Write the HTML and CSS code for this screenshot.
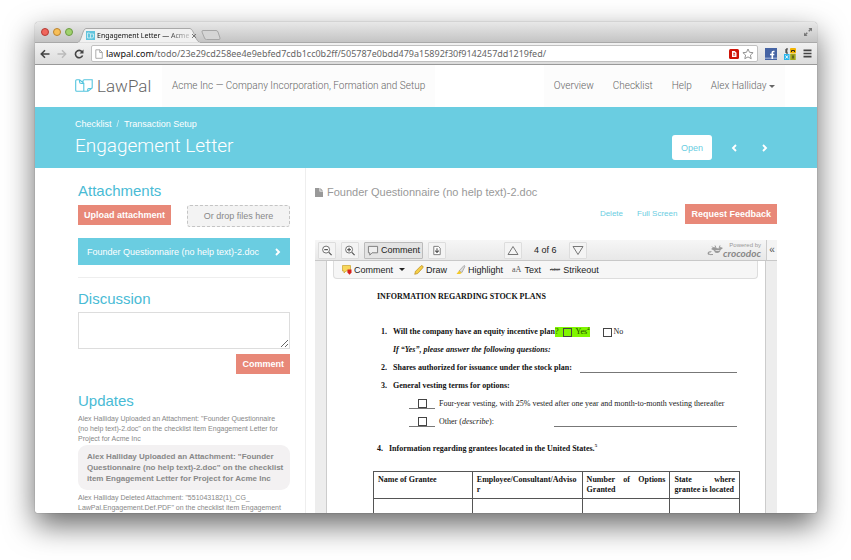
FILE: index.html
```html
<!DOCTYPE html>
<html lang="en">
<head>
<meta charset="utf-8">
<title>Engagement Letter — Acme Inc</title>
<link rel="stylesheet" href="styles.css">
</head>
<body>
<div class="window">
  <div class="tabstrip">
    <div class="lights"><i class="light red"></i><i class="light amber"></i><i class="light green"></i></div>
    <div class="tab">
      <svg class="tab-shape" viewBox="0 0 124 15" preserveAspectRatio="none"><path d="M0 15C5 14 5 1 9 .5H113C117 1 118 14 124 15Z" fill="#f1f1f1" stroke="#a9a9a9"/><path d="M1 15H123" stroke="#f1f1f1"/></svg>
      <svg class="favicon" viewBox="0 0 9 9"><rect width="9" height="9" fill="#62c4dd"/><path d="M1.500 2h2l1 1v4h-3zM4.500 3h3v3l-1 1h-2" fill="none" stroke="#d8f2f8" stroke-width=".8"/></svg>
      <span class="tab-title">Engagement Letter — Acme</span>
      <svg class="tab-close" viewBox="0 0 6 6"><path d="M1 1l4 4M5 1L1 5" stroke="#777" stroke-width="1"/></svg>
    </div>
    <svg class="newtab" viewBox="0 0 20 10"><path d="M2 .5h13q1.500 0 2 1.500l2 6q.3 1.500-1 1.500H5.500q-1.500 0-2-1.500L1 2Q.6.5 2 .5z" fill="#d5d5d5" stroke="#a6a6a6"/></svg>
    <svg class="expand" viewBox="0 0 10 10"><path d="M5.500 1H9v3.500L7.800 3.300 6.300 4.800 5.200 3.700l1.500-1.500zM4.500 9H1V5.500l1.200 1.200 1.500-1.500 1.100 1.100-1.500 1.500z" fill="#777"/></svg>
  </div>
  <div class="toolbar">
    <svg class="tool" viewBox="0 0 10 10"><path d="M9.500 5H1.500M5 1.300L1.300 5 5 8.700" fill="none" stroke="#444" stroke-width="1.600"/></svg>
    <svg class="tool" viewBox="0 0 10 10"><path d="M.5 5h8M5 1.300L8.700 5 5 8.700" fill="none" stroke="#bbb" stroke-width="1.400"/></svg>
    <svg class="tool" viewBox="0 0 10 10"><path d="M8 2.700A3.700 3.700 0 1 0 8.600 6.500" fill="none" stroke="#444" stroke-width="1.600"/><path d="M9.500.5v4h-4z" fill="#444"/></svg>
    <div class="address">
      <svg class="page-icon" viewBox="0 0 8 10"><path d="M.8.8h4l2.500 2.500v6H.8zM4.700.8v2.700h2.600" fill="#fff" stroke="#999" stroke-width=".8"/></svg>
      <span class="url"><b>lawpal.com</b>/todo/23e29cd258ee4e9ebfed7cdb1cc0b2ff/505787e0bdd479a15892f30f9142457dd1219fed/</span>
      <svg class="ext" viewBox="0 0 10 10"><rect width="10" height="10" rx="1.500" fill="#cf1408"/><path d="M3 2h2.700L7.500 3.800V8H3z" fill="#fff"/><path d="M4.200 4.300h2M4.200 6h2" stroke="#cf1408"/></svg>
      <svg class="star" viewBox="0 0 12 12"><path d="M6 1l1.500 3.300 3.600.4-2.700 2.400.8 3.600L6 8.900l-3.200 1.800.8-3.600L.9 4.700l3.600-.4z" fill="#fff" stroke="#888" stroke-width=".9"/></svg>
    </div>
    <svg class="app" viewBox="0 0 12 12"><rect width="12" height="12" fill="#4664a4"/><rect y="9.500" width="12" height="1.500" fill="#8aa0cc"/><path d="M9.500 3.500H8.300q-1 0-1 1V11M5 6.500h4.300" fill="none" stroke="#fff" stroke-width="1.600"/></svg>
    <svg class="app" viewBox="0 0 12 12"><rect width="6" height="6" fill="#e9e9e9"/><rect x="6" width="6" height="5.500" rx="1" fill="#f2b300"/><rect y="6" width="5.500" height="6" fill="#29b5ec"/><rect x="6.200" y="6" width="5.500" height="6" fill="#a2a81b"/><path d="M4 1H2v4h2M2 3h1.500M7.500 4V2.500h3V4M9 7.500v3" fill="none" stroke="#222"/><path d="M1.500 7.500l2.500 3M4 7.500l-2.500 3" stroke="#fff"/></svg>
    <svg class="menu" viewBox="0 0 9 9"><path d="M.5 1.300h8M.5 4.500h8M.5 7.700h8" stroke="#444" stroke-width="1.700"/></svg>
  </div>

  <header class="site-header">
    <a class="brand" href="#">
      <svg class="brand-mark" viewBox="0 0 18 14"><path d="M4.500.7H1.700q-1 0-1 1v9.600q0 1 1 1h7.500M4.500.7v2q0 1.800 2 1.800h2M4.500.7l4.300 3.500v8.100M8 3.500V2q0-1.300 1.300-1.300h7.900V8.500q0 1-1 1h-2.500q-1 0-1 1v2M17 9l-4 3.300H9" fill="none" stroke="#55c5de" stroke-width="1.100"/></svg>
      <span>LawPal</span>
    </a>
    <div class="project">Acme Inc — Company Incorporation, Formation and Setup</div>
    <nav class="nav">
      <a href="#">Overview</a><a href="#">Checklist</a><a href="#">Help</a><a href="#">Alex Halliday <i class="caret"></i></a>
    </nav>
  </header>

  <section class="hero">
    <div>
      <div class="crumbs"><a href="#">Checklist</a><span>/</span><a href="#">Transaction Setup</a></div>
      <h1>Engagement Letter</h1>
    </div>
    <div class="hero-actions">
      <button class="open">Open</button>
      <button class="step" aria-label="Previous"><svg viewBox="0 0 6 8"><path d="M5 1L2 4l3 3" fill="none" stroke="#fff" stroke-width="1.900"/></svg></button>
      <button class="step" aria-label="Next"><svg viewBox="0 0 6 8"><path d="M1 1l3 3-3 3" fill="none" stroke="#fff" stroke-width="1.900"/></svg></button>
    </div>
  </section>

  <div class="content">
    <aside class="side">
      <h2>Attachments</h2>
      <div class="upload">
        <button class="btn">Upload attachment</button>
        <div class="drop">Or drop files here</div>
      </div>
      <a class="file" href="#"><span>Founder Questionnaire (no help text)-2.doc</span>
        <svg viewBox="0 0 6 8"><path d="M1 1l3 3-3 3" fill="none" stroke="#fff" stroke-width="1.900"/></svg></a>
      <hr>
      <h2><label for="message">Discussion</label></h2>
      <textarea id="message"></textarea>
      <button class="btn send">Comment</button>
      <h2>Updates</h2>
      <p class="update">Alex Halliday Uploaded an Attachment: "Founder Questionnaire<br>(no help text)-2.doc" on the checklist item Engagement Letter for<br>Project for Acme Inc</p>
      <p class="bubble">Alex Halliday Uploaded an Attachment: "Founder<br>Questionnaire (no help text)-2.doc" on the checklist<br>item Engagement Letter for Project for Acme Inc</p>
      <p class="update">Alex Halliday Deleted Attachment: "551043182(1)_CG_<br>LawPal.Engagement.Def.PDF" on the checklist item Engagement</p>
    </aside>

    <main class="main">
      <h3><svg viewBox="0 0 8 9"><path d="M0 0h4.500v3.500H8V9H0zM5.300 0L8 2.700H5.300z" fill="#999"/></svg>Founder Questionnaire (no help text)-2.doc</h3>
      <div class="doc-actions">
        <a href="#">Delete</a><a href="#">Full Screen</a><button class="btn">Request Feedback</button>
      </div>
      <div class="viewer">
        <div class="viewer-bar">
          <button class="vb" aria-label="Zoom out"><svg class="i12" viewBox="0 0 12 12"><circle cx="5" cy="5" r="3.800" fill="#fff" stroke="#666"/><path d="M3 5h4M8 8l3 3" stroke="#555" stroke-width="1.300"/></svg></button>
          <button class="vb" aria-label="Zoom in"><svg class="i12" viewBox="0 0 12 12"><circle cx="5" cy="5" r="3.800" fill="#fff" stroke="#666"/><path d="M3 5h4M5 3v4M8 8l3 3" stroke="#555" stroke-width="1.300"/></svg></button>
          <button class="vb pressed"><svg class="i12" viewBox="0 0 12 12"><path d="M1 1.500h10v7H5L2.500 11V8.500H1z" fill="#eee" stroke="#777"/></svg>Comment</button>
          <button class="vb" aria-label="Download"><svg class="i12" viewBox="0 0 12 12"><path d="M2.500 1.500h5L9.500 3.500v7h-7z" fill="#fff" stroke="#777"/><path d="M6 3.500v5M4 6.200l2 2 2-2" fill="none" stroke="#555" stroke-width="1.200"/></svg></button>
          <div class="pager">
            <button class="vb" aria-label="Previous page"><svg class="i12" viewBox="0 0 12 10"><path d="M6 1l5 8H1z" fill="#f4f4f4" stroke="#777"/></svg></button>
            <span>4 of 6</span>
            <button class="vb" aria-label="Next page"><svg class="i12" viewBox="0 0 12 10"><path d="M6 9l5-8H1z" fill="#f4f4f4" stroke="#777"/></svg></button>
          </div>
          <div class="powered">
            <svg class="croc" viewBox="0 0 16 11"><path d="M2.500 10Q0 9.500.8 7.500 2 5.500 5 6.500L3.500 7.500q-2-.3-1.500 1zM4 4l3 1.500Q7.500 8 10 8q3 0 3.500-3L16 3l-2.500-1L12 3.500 9 3 7 2z" fill="#999"/><path d="M5 1.500l2 2M8 .5l1 2.500M13 .5l-1 3M1 8q1.500 2.500 5 1.500" fill="none" stroke="#999"/><path d="M8.500 5.500h4" stroke="#eee" stroke-width=".8"/></svg>
            <div><small>Powered by</small><b>crocodoc</b></div>
          </div>
          <button class="collapse">«</button>
        </div>
        <div class="stage">
          <div class="tools">
            <button><svg class="i10" viewBox="0 0 10 10"><path d="M.5.5h8v5.500H4L2 8V6H.5z" fill="#f7d75c" stroke="#c9a02c" stroke-width=".7"/><path d="M5.500 4.500h4V7.500L7.500 9.800 5.500 7.500z" fill="#d8201c"/></svg>Comment <i class="caret dark"></i></button>
            <button><svg class="i10" viewBox="0 0 10 10"><path d="M.7 9.300l.8-3L7 .8q1-.5 1.700.2t.2 1.700L3.700 8.500z" fill="#f5cf46" stroke="#b98d25" stroke-width=".7"/></svg>Draw</button>
            <button><svg class="i10" viewBox="0 0 10 10"><path d="M3 6L8 .5l1 .7-3 6.300z" fill="#ddd" stroke="#888" stroke-width=".6"/><path d="M.5 9l2.700-3.500L5.700 8 4 9z" fill="#f4c928"/></svg>Highlight</button>
            <button><span class="glyph">aA</span>Text</button>
            <button><span class="glyph tiny">ABC</span>Strikeout</button>
          </div>
          <article class="page">
            <h4>INFORMATION REGARDING STOCK PLANS</h4>
            <div class="q first"><b class="num">1.</b><b>Will the company have an equity incentive plan</b><label class="hl"><span>?</span><input type="checkbox"><span>Yes<sup>4</sup></span></label><label class="no"><input type="checkbox">No</label></div>
            <div class="q follow"><b><i>If “Yes”, please answer the following questions:</i></b></div>
            <div class="q"><b class="num">2.</b><b>Shares authorized for issuance under the stock plan:</b><span class="blank"></span></div>
            <div class="q"><b class="num">3.</b><b>General vesting terms for options:</b></div>
            <div class="q opt"><span class="tick"><input type="checkbox" id="four"></span><label for="four">Four-year vesting, with 25% vested after one year and month-to-month vesting thereafter</label></div>
            <div class="q opt"><span class="tick"><input type="checkbox" id="other"></span><label class="other" for="other">Other (<i>describe</i>):</label><span class="blank"></span></div>
            <div class="q fourth"><b class="num">4.</b><b>Information regarding grantees located in the United States.<sup>5</sup></b></div>
            <table>
              <thead><tr><th class="c1">Name of Grantee</th><th class="c2">Employee/Consultant/Advisor</th><th class="c3">Number of Options Granted</th><th class="c4">State where grantee is located</th></tr></thead>
              <tbody><tr><td></td><td></td><td></td><td></td></tr></tbody>
            </table>
          </article>
        </div>
      </div>
    </main>
  </div>
</div>
</body>
</html>
```
FILE: styles.css
```css
* { box-sizing: border-box; }
body {
  margin: 0;
  height: 100vh;
  padding: 22px 34px 47px 35px;
  background: #fff;
  font: 9px/12px "Liberation Sans", Arial, sans-serif;
  color: #888;
  overflow: hidden;
}
a { color: inherit; text-decoration: none; }
button { font: inherit; color: inherit; border: 0; margin: 0; padding: 0; background: none; white-space: nowrap; }
svg { display: block; flex: none; }
h1, h2, h3, h4, p { margin: 0; font-weight: normal; }
input { appearance: none; margin: 0; width: 9px; height: 9px; border: 1px solid #444; flex: none; }

.window {
  height: 100%;
  display: flex;
  flex-direction: column;
  overflow: hidden;
  background: #fff;
  border-radius: 4px 4px 2px 2px;
  box-shadow: 0 0 1px rgba(0,0,0,.6), 0 12px 30px rgba(0,0,0,.6);
}

/* Browser chrome */
.tabstrip {
  flex: none;
  height: 21px;
  display: flex;
  align-items: flex-end;
  background: linear-gradient(#e8e8e8, #c4c4c4);
  border-bottom: 1px solid #a9a9a9;
}
.lights { display: flex; gap: 4px; padding: 0 4px 6px 6px; }
.light { width: 8px; height: 8px; border-radius: 50%; border: 1px solid; }
.red { background: #f0665c; border-color: #b43b36; }
.amber { background: #f8bf58; border-color: #b98331; }
.green { background: #a0d26d; border-color: #6c9a43; }
.tab {
  position: relative;
  width: 124px;
  height: 15px;
  margin-bottom: -1px;
  padding: 0 12px 0 9px;
  display: flex;
  align-items: center;
  gap: 2px;
}
.tab > * { position: relative; }
.tab .tab-shape { position: absolute; inset: 0; width: 100%; height: 100%; }
.favicon { width: 9px; height: 9px; }
.tab-title {
  flex: 1;
  white-space: nowrap;
  font: 7px/12px "Noto Sans", sans-serif;
  color: #111;
  mask-image: linear-gradient(90deg, #000 75%, rgba(0,0,0,.2));
}
.tab-close { width: 6px; height: 6px; }
.newtab { width: 20px; height: 10px; margin-bottom: 2px; }
.expand { width: 10px; height: 10px; margin: 0 4px 5px auto; }
.toolbar {
  flex: none;
  height: 22px;
  display: flex;
  align-items: center;
  gap: 7px;
  padding: 0 5px;
  background: linear-gradient(#f1f1f1, #dcdcdc);
  border-bottom: 1px solid #999;
}
.tool { width: 10px; height: 10px; }
.address {
  flex: 1;
  height: 17px;
  display: flex;
  align-items: center;
  gap: 3px;
  padding: 0 3px;
  background: #fff;
  border: 1px solid #c0c0c0;
  border-radius: 2px;
}
.page-icon { width: 8px; height: 10px; }
.url { flex: 1; font: 9px/14px "Noto Sans", sans-serif; color: #666; white-space: nowrap; overflow: hidden; }
.url b { font-weight: normal; color: #111; }
.ext { width: 10px; height: 10px; }
.star, .app { width: 12px; height: 12px; }
.menu { width: 9px; height: 9px; }

/* Site header */
.site-header { flex: none; height: 42px; display: flex; align-items: stretch; padding: 0 32px 0 40px; font: 300 10px/12px Roboto, sans-serif; }
.brand { width: 87px; display: flex; align-items: center; gap: 4px; font-size: 17px; color: #666; }
.brand-mark { width: 18px; height: 14px; }
.project { display: flex; align-items: center; padding: 0 10px; background: #fcfcfc; color: #666; white-space: nowrap; }
.nav { margin-left: auto; display: flex; align-items: center; gap: 19px; padding: 0 10px; background: #fcfcfc; color: #666; white-space: nowrap; }
.caret { display: inline-block; border: 3px solid transparent; border-top-color: #666; border-bottom: 0; vertical-align: middle; }
.dark { border-top-color: #222; margin-left: 4px; }

.hero { flex: none; height: 61px; display: flex; justify-content: space-between; padding: 11px 43px 0 40px; background: #6acde1; color: #fff; }
.crumbs { display: flex; gap: 5px; }
.crumbs span { opacity: .7; }
h1 { font: 300 19px/32px Roboto, sans-serif; }
.hero-actions { display: flex; align-items: flex-start; gap: 12px; padding-top: 17px; }
.open { width: 40px; height: 25px; background: #fff; color: #6acde1; border-radius: 3px; }
.step { width: 19px; height: 25px; display: flex; align-items: center; justify-content: center; }
.step svg, .file svg { width: 6px; height: 8px; }

/* Columns */
.content { flex: 1; min-height: 0; display: flex; }
.side { flex: none; width: 271px; padding: 13px 15px 0 43px; border-right: 1px solid #eee; overflow: hidden; }
h2 { font-size: 15px; line-height: 20px; color: #49bbd5; }
.btn { height: 20px; padding: 0 6px; background: #e88878; color: #fff; font-weight: bold; }
.upload { display: flex; justify-content: space-between; align-items: flex-start; margin-top: 4px; }
.drop { width: 103px; height: 22px; border: 1px dashed #c4c4c4; border-radius: 3px; background: #f3f3f3; text-align: center; line-height: 20px; }
.file { display: flex; justify-content: space-between; align-items: center; height: 27px; margin-top: 11px; padding: 0 9px; background: #6acde1; color: #fff; }
hr { margin: 12px 0 11px; border: 0; border-top: 1px solid #eee; }
textarea { display: block; width: 100%; height: 37px; margin: 3px 0 5px; border: 1px solid #ddd; padding: 4px; font: inherit; background: #fff; }
.send { display: block; margin: 0 0 17px auto; }
.update { font-size: 7px; line-height: 10px; margin-top: 3px; white-space: nowrap; }
.bubble { margin-top: 1px; padding: 6px 9px; border-radius: 9px; background: #f3f1f2; font-size: 8px; line-height: 11px; font-weight: bold; white-space: nowrap; }

.main { flex: 1; min-width: 0; display: flex; flex-direction: column; padding: 16px 40px 0 9px; }
h3 { display: flex; align-items: center; gap: 4px; font-size: 11px; line-height: 16px; color: #999; }
h3 svg { width: 8px; height: 9px; }
.doc-actions { display: flex; justify-content: flex-end; align-items: center; margin: 4px 0 16px; color: #6acde1; }
.doc-actions a { margin-right: 14px; font-size: 8px; }
.doc-actions a + a { margin-right: 8px; }

/* Document viewer */
.viewer { flex: 1; min-height: 0; display: flex; flex-direction: column; color: #222; }
.viewer-bar { flex: none; height: 21px; display: flex; align-items: center; gap: 5px; padding-left: 3px; background: linear-gradient(#f6f6f6, #e8e8e8); border-bottom: 1px solid #c8c8c8; }
.vb { display: flex; align-items: center; gap: 2px; height: 17px; padding: 0 2px; border: 1px solid #ddd; border-radius: 1px; background: #f4f4f4; }
.pressed { background: #e4e4e4; border-color: #bbb; }
.i12 { width: 12px; height: 11px; }
.i10 { width: 10px; height: 10px; }
.pager { display: flex; align-items: center; gap: 12px; margin-left: 53px; }
.powered { margin-left: auto; display: flex; align-items: center; color: #999; }
.croc { width: 16px; height: 11px; }
.powered div { text-align: right; }
.powered small { display: block; font-size: 6px; line-height: 6px; }
.powered b { display: block; font: italic bold 10px/10px Lato, sans-serif; color: #888; }
.collapse { align-self: stretch; width: 11px; border-left: 1px solid #ccc; background: #f4f4f4; font-size: 10px; color: #555; }
.stage { position: relative; flex: 1; min-height: 0; overflow: hidden; padding: 0 11px; background: #ededed; }
.tools { position: absolute; top: 0; left: 18px; right: 19px; height: 18px; display: flex; align-items: center; gap: 9px; padding: 0 8px; background: #f6f6f6; border: 1px solid #ddd; border-top: 0; border-radius: 0 0 4px 4px; }
.tools button { display: flex; align-items: center; gap: 2px; }
.glyph { font: 8px/10px "Liberation Serif", serif; color: #555; margin-right: 1px; }
.tiny { font-size: 5px; text-decoration: line-through; }
.page { height: 100%; padding: 31px 25px 0 46px; background: #fff; border: 1px solid #ccc; border-width: 0 1px; font: 8px/10px "Liberation Serif", serif; color: #222; overflow: hidden; }
h4 { font-size: 8px; font-weight: bold; margin-left: 4px; color: #111; }
.q { display: flex; align-items: center; height: 10px; margin: 8px 3px 0 8px; white-space: nowrap; }
.q b { color: #111; }
.first { margin-top: 25px; }
.num { width: 12px; }
.follow { padding-left: 12px; }
sup { font-size: 5px; line-height: 0; }
.hl { display: flex; align-items: center; gap: 5px; background: #80f600; color: #1c4a00; }
.hl span + input + span { margin-left: -2px; }
.no { display: flex; align-items: center; gap: 2px; margin-left: 13px; }
.blank { flex: 1; align-self: stretch; margin-left: 8px; border-bottom: 1px solid #777; }
.opt { padding-left: 28px; }
.tick { width: 26px; height: 10px; margin-right: 4px; display: flex; justify-content: center; border-bottom: 1px solid #777; }
.other { width: 107px; }
.fourth { margin: 17px 3px 0 4px; }
table { width: 100%; margin-top: 17px; border-collapse: collapse; table-layout: fixed; }
th, td { border: 1px solid #555; padding: 3px 4px; vertical-align: top; }
th { height: 27px; text-align: justify; overflow-wrap: anywhere; color: #111; }
td { height: 27px; }
.c1 { width: 27%; }
.c2 { width: 30%; }
.c3 { width: 24%; }
```
